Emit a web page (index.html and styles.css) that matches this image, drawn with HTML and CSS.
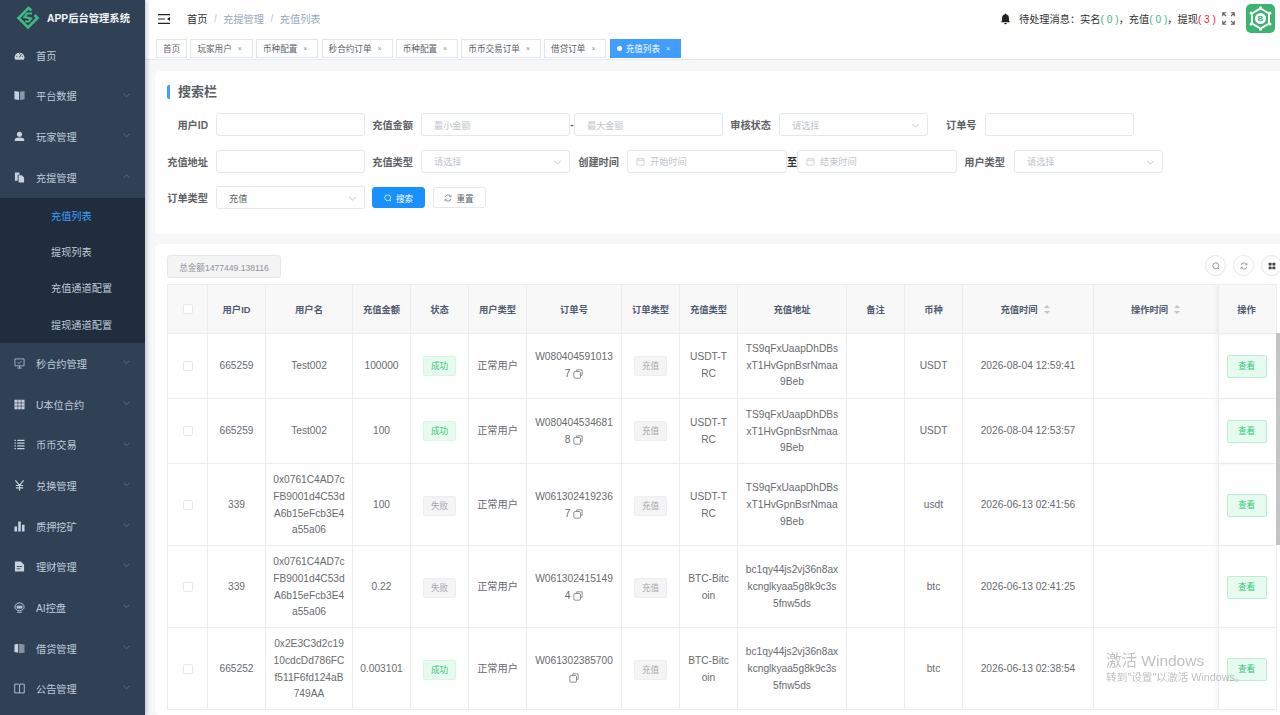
FILE: index.html
```html
<!DOCTYPE html>
<html lang="zh-CN">
<head>
    <meta charset="UTF-8">
    <meta name="viewport" content="width=device-width, initial-scale=1.0">
    <title>APP后台管理系统</title>
    <link rel="stylesheet" href="styles.css">
</head>
<body>
<svg class="defs" width="0" height="0">
    <symbol id="chev" viewBox="0 0 10 6"><path d="M1 1l4 4 4-4" fill="none" stroke="currentColor" stroke-width="1"/></symbol>
    <symbol id="copy" viewBox="0 0 12 12"><path d="M4.500 3V1h6.500v6.500H9" fill="none" stroke="currentColor" stroke-width=".9"/><rect x="1" y="3" width="8" height="8" rx="1.500" fill="none" stroke="currentColor" stroke-width=".9"/></symbol>
</svg>

<div class="app">
    <aside class="sidebar">
        <div class="logo">
            <svg width="24" height="24" viewBox="0 0 24 24"><path d="M15.500 4.500L12.500 2 2.500 12 12 21.500 21.500 12l-3-3" fill="none" stroke="#41b883" stroke-width="2.600"/><path d="M16 7.500H11L8.500 11 15 12.500 13 15.500H9" fill="none" stroke="#41b883" stroke-width="2.200"/></svg>
            <span>APP后台管理系统</span>
        </div>
        <ul class="menu">
            <li class="item"><svg class="ico" viewBox="0 0 12 12"><path d="M.5 8.500a5.500 5.500 0 0 1 11 0l-1 2h-9z" fill="currentColor"/><path d="M6 8l2-3.500M2.500 7h1M8.500 7h1M6 3.500v1" stroke="#304156" stroke-width="1"/></svg><span>首页</span></li>
            <li class="item"><svg class="ico" viewBox="0 0 12 12"><path d="M.5 1l5 .8v9.200l-5-.8z" fill="currentColor"/><path d="M6.500 1.800l5-.8v9.200l-5 .8z" fill="currentColor" opacity=".6"/></svg><span>平台数据</span><svg class="chev"><use href="#chev"/></svg></li>
            <li class="item"><svg class="ico" viewBox="0 0 12 12"><circle cx="6" cy="3.500" r="2.800" fill="currentColor"/><path d="M.8 11V9.500C.8 7.800 3 7 6 7s5.200.8 5.200 2.500V11z" fill="currentColor"/></svg><span>玩家管理</span><svg class="chev"><use href="#chev"/></svg></li>
            <li class="item open"><svg class="ico" viewBox="0 0 12 12"><path d="M1 .5h5v2.500H4v6.500H1z" fill="currentColor"/><path d="M5 3.500h3.500L11 6v5.500H5z" fill="currentColor"/></svg><span>充提管理</span><svg class="chev up"><use href="#chev"/></svg></li>
            <li class="sub active">充值列表</li>
            <li class="sub">提现列表</li>
            <li class="sub">充值通道配置</li>
            <li class="sub last">提现通道配置</li>
            <li class="item"><svg class="ico" viewBox="0 0 12 12"><path d="M1 1h10v7.500H1zM6 8.500V11M3.500 11h5M4 4.500l1.500 1.500L8 3.500" fill="none" stroke="currentColor" stroke-width=".8"/></svg><span>秒合约管理</span><svg class="chev"><use href="#chev"/></svg></li>
            <li class="item"><svg class="ico" viewBox="0 0 12 12"><path d="M.5 .8h11v10.400H.5z" fill="currentColor"/><path d="M4.200 .8v10.400M7.800 .8v10.400M.5 4.300h11M.5 7.700h11" stroke="#304156" stroke-width=".7"/></svg><span>U本位合约</span><svg class="chev"><use href="#chev"/></svg></li>
            <li class="item"><svg class="ico" viewBox="0 0 12 12"><path d="M3.500 1.500H11.500M3.500 4.500H11.500M3.500 7.500H11.500M3.500 10.500H11.500M.5 1.500h1.500M.5 4.500h1.500M.5 7.500h1.500M.5 10.500h1.500" stroke="currentColor" stroke-width="1.300"/></svg><span>币币交易</span><svg class="chev"><use href="#chev"/></svg></li>
            <li class="item"><svg class="ico" viewBox="0 0 12 12"><path d="M1.500 .5L6 5.800 10.500 .5M6 5.800v6M2 6h8M2 8.500h8" fill="none" stroke="currentColor" stroke-width="1.300"/></svg><span>兑换管理</span><svg class="chev"><use href="#chev"/></svg></li>
            <li class="item"><svg class="ico" viewBox="0 0 12 12"><path d="M.5 6h2.800v5.500H.5zM4.600 .5h2.800v11H4.600zM8.700 4h2.800v7.500H8.700z" fill="currentColor"/></svg><span>质押挖矿</span><svg class="chev"><use href="#chev"/></svg></li>
            <li class="item"><svg class="ico" viewBox="0 0 12 12"><path d="M1 .5h6.500L11 4v7.500H1z" fill="currentColor"/><path d="M3 6h6M3 8.500h4" stroke="#304156" stroke-width=".9"/></svg><span>理财管理</span><svg class="chev"><use href="#chev"/></svg></li>
            <li class="item"><svg class="ico" viewBox="0 0 12 12"><path d="M1 5.500a5 4.500 0 0 1 10 0 5 4 0 0 1-10 0zM3.500 11.200h5" fill="none" stroke="currentColor" stroke-width="1"/><path d="M3 4h6v3.200H3z" fill="currentColor"/><path d="M4.500 5.500h.5M7 5.500h.5" stroke="#304156" stroke-width="1"/></svg><span>AI控盘</span><svg class="chev"><use href="#chev"/></svg></li>
            <li class="item"><svg class="ico" viewBox="0 0 12 12"><path d="M.5 1.500l4-.8v10l-4-.8z" fill="currentColor"/><path d="M5.500 .7l6 .8v9l-6 .8z" fill="currentColor" opacity=".55"/></svg><span>借贷管理</span><svg class="chev"><use href="#chev"/></svg></li>
            <li class="item"><svg class="ico" viewBox="0 0 12 12"><path d="M.8 1.200h4.700L6 1.700l.5-.5h4.700v9.600H.8zM6 1.700v9" fill="none" stroke="currentColor" stroke-width=".9"/></svg><span>公告管理</span><svg class="chev"><use href="#chev"/></svg></li>
        </ul>
    </aside>

    <main class="main">
        <header class="topbar">
            <svg class="fold" viewBox="0 0 12 10"><path d="M0 .6h12M0 5h7M0 9.400h12" stroke="#222" stroke-width="1.100"/><path d="M12 3v4L9 5z" fill="#222"/></svg>
            <nav class="crumbs">
                <span class="home">首页</span><i>/</i><span>充提管理</span><i>/</i><span>充值列表</span>
            </nav>
            <div class="notice">
                <svg class="bell" viewBox="0 0 12 12"><path d="M6 0c.6 0 1 .4 1 1 2 .5 2.800 2 2.800 4v3L11 9.500H1L2.200 8V5c0-2 .8-3.500 2.800-4 0-.6.400-1 1-1zM4.500 10.300h3a1.500 1.500 0 0 1-3 0z" fill="#222"/></svg>
                <span>待处理消息：实名<b class="ok">( 0 )</b>，充值<b class="ok">( 0 )</b>，提现<b class="bad">( 3 )</b></span>
            </div>
            <svg class="full" viewBox="0 0 14 14"><path d="M.8 4.500V.8h3.700M.8 .8l3.500 3.500M13.200 4.500V.8H9.500M13.200 .8L9.700 4.300M.8 9.500v3.700h3.700M.8 13.200l3.500-3.500M13.200 9.500v3.700H9.500M13.200 13.200L9.700 9.700" fill="none" stroke="#666" stroke-width="1.300"/></svg>
            <div class="avatar">
                <svg viewBox="0 0 29 29">
                    <path d="M14.500 4.500l8.500 5v10l-8.500 5-8.500-5v-10z" fill="none" stroke="#fff" stroke-width="2"/>
                    <circle cx="14.500" cy="14.500" r="5.500" fill="#fff"/>
                    <g fill="#fff">
                        <circle cx="14.500" cy="3.800" r="1.500"/><circle cx="14.500" cy="25.200" r="1.500"/>
                        <circle cx="5" cy="9" r="1.500"/><circle cx="24" cy="9" r="1.500"/>
                        <circle cx="5" cy="20" r="1.500"/><circle cx="24" cy="20" r="1.500"/>
                    </g>
                    <text x="14.500" y="17.300" text-anchor="middle" class="avatar-b">B</text>
                </svg>
            </div>
        </header>

        <div class="tabs">
            <a class="tab">首页</a>
            <a class="tab">玩家用户<i>×</i></a>
            <a class="tab">币种配置<i>×</i></a>
            <a class="tab">秒合约订单<i>×</i></a>
            <a class="tab">币种配置<i>×</i></a>
            <a class="tab">币币交易订单<i>×</i></a>
            <a class="tab">借贷订单<i>×</i></a>
            <a class="tab current"><em></em>充值列表<i>×</i></a>
        </div>

        <div class="content">
            <section class="card search">
                <h2 class="title">搜索栏</h2>
                <div class="row">
                    <label class="lb w1">用户ID</label><div class="input w-a"></div>
                    <label class="lb w2">充值金额</label><div class="input w-b ph">最小金额</div>
                    <span class="dash">-</span>
                    <div class="input w-b ph">最大金额</div>
                    <label class="lb w3">审核状态</label><div class="input w-a ph sel">请选择<svg class="chev"><use href="#chev"/></svg></div>
                    <label class="lb w4">订单号</label><div class="input w-a"></div>
                </div>
                <div class="row">
                    <label class="lb w1">充值地址</label><div class="input w-a"></div>
                    <label class="lb w2">充值类型</label><div class="input w-b ph sel">请选择<svg class="chev"><use href="#chev"/></svg></div>
                    <label class="lb w5">创建时间</label>
                    <div class="input w-c ph"><svg class="cal" viewBox="0 0 10 10"><path d="M1 2h8v7H1zM1 4h8M3 1v1.500M7 1v1.500" fill="none" stroke="currentColor" stroke-width=".7"/></svg>开始时间</div>
                    <span class="dash to">至</span>
                    <div class="input w-c ph"><svg class="cal" viewBox="0 0 10 10"><path d="M1 2h8v7H1zM1 4h8M3 1v1.500M7 1v1.500" fill="none" stroke="currentColor" stroke-width=".7"/></svg>结束时间</div>
                    <label class="lb w6">用户类型</label><div class="input w-a ph sel">请选择<svg class="chev"><use href="#chev"/></svg></div>
                </div>
                <div class="row">
                    <label class="lb w1">订单类型</label><div class="input w-a val sel">充值<svg class="chev"><use href="#chev"/></svg></div>
                    <button class="btn primary"><svg viewBox="0 0 10 10"><circle cx="4.700" cy="4.700" r="3.700" fill="none" stroke="currentColor" stroke-width=".9"/><path d="M7.500 7.500L9 9" stroke="currentColor" stroke-width=".9"/></svg>搜索</button>
                    <button class="btn"><svg viewBox="0 0 10 10"><path d="M1.300 4a3.800 3.800 0 0 1 7-1M8.700 6a3.800 3.800 0 0 1-7 1" fill="none" stroke="currentColor" stroke-width=".9"/><path d="M8.800 1v2.400H6.400M1.200 9V6.600h2.400" fill="none" stroke="currentColor" stroke-width=".7"/></svg>重置</button>
                </div>
            </section>

            <section class="card list">
                <div class="tools">
                    <span class="total">总金额1477449.138116</span>
                    <div class="tool-btns">
                        <span class="circle"><svg viewBox="0 0 10 10"><circle cx="4.700" cy="4.700" r="3.700" fill="none" stroke="currentColor" stroke-width=".8"/><path d="M7.500 7.500L9 9" stroke="currentColor" stroke-width=".8"/></svg></span>
                        <span class="circle"><svg viewBox="0 0 10 10"><path d="M1.300 4a3.800 3.800 0 0 1 7-1M8.700 6a3.800 3.800 0 0 1-7 1" fill="none" stroke="currentColor" stroke-width=".8"/><path d="M8.800 1v2.400H6.400M1.200 9V6.600h2.400" fill="none" stroke="currentColor" stroke-width=".6"/></svg></span>
                        <span class="circle"><svg viewBox="0 0 10 10"><rect x=".8" y=".8" width="3.700" height="3.700" rx=".6" fill="#444"/><rect x="5.500" y=".8" width="3.700" height="3.700" rx=".6" fill="#444"/><rect x=".8" y="5.500" width="3.700" height="3.700" rx=".6" fill="#444"/><rect x="5.500" y="5.500" width="3.700" height="3.700" rx=".6" fill="#444"/></svg></span>
                    </div>
                </div>
                <table class="grid">
                    <colgroup>
                        <col class="c40"><col class="c58"><col class="c87"><col class="c58"><col class="c58"><col class="c58"><col class="c95"><col class="c58"><col class="c58"><col class="c109"><col class="c58"><col class="c58"><col class="c131"><col class="c125"><col class="c58">
                    </colgroup>
                    <thead>
                        <tr>
                            <th><span class="check head"></span></th><th>用户ID</th><th>用户名</th><th>充值金额</th><th>状态</th><th>用户类型</th><th>订单号</th><th>订单类型</th><th>充值类型</th><th>充值地址</th><th>备注</th><th>币种</th>
                            <th>充值时间<span class="sort"></span></th><th>操作时间<span class="sort"></span></th><th class="fixed">操作</th>
                        </tr>
                    </thead>
                    <tbody>
                        <tr class="r65">
                            <td><span class="check"></span></td><td>665259</td><td>Test002</td><td>100000</td><td><span class="tag ok">成功</span></td><td>正常用户</td>
                            <td class="wrap">W080404591013<br>7 <svg class="cp"><use href="#copy"/></svg></td><td><span class="tag gray">充值</span></td><td class="wrap">USDT-T<br>RC</td>
                            <td class="wrap">TS9qFxUaapDhDBs<br>xT1HvGpnBsrNmaa<br>9Beb</td><td></td><td>USDT</td><td>2026-08-04 12:59:41</td><td></td><td class="fixed"><span class="view">查看</span></td>
                        </tr>
                        <tr class="r65">
                            <td><span class="check"></span></td><td>665259</td><td>Test002</td><td>100</td><td><span class="tag ok">成功</span></td><td>正常用户</td>
                            <td class="wrap">W080404534681<br>8 <svg class="cp"><use href="#copy"/></svg></td><td><span class="tag gray">充值</span></td><td class="wrap">USDT-T<br>RC</td>
                            <td class="wrap">TS9qFxUaapDhDBs<br>xT1HvGpnBsrNmaa<br>9Beb</td><td></td><td>USDT</td><td>2026-08-04 12:53:57</td><td></td><td class="fixed"><span class="view">查看</span></td>
                        </tr>
                        <tr class="r82">
                            <td><span class="check"></span></td><td>339</td><td class="wrap">0x0761C4AD7c<br>FB9001d4C53d<br>A6b15eFcb3E4<br>a55a06</td><td>100</td><td><span class="tag gray">失败</span></td><td>正常用户</td>
                            <td class="wrap">W061302419236<br>7 <svg class="cp"><use href="#copy"/></svg></td><td><span class="tag gray">充值</span></td><td class="wrap">USDT-T<br>RC</td>
                            <td class="wrap">TS9qFxUaapDhDBs<br>xT1HvGpnBsrNmaa<br>9Beb</td><td></td><td>usdt</td><td>2026-06-13 02:41:56</td><td></td><td class="fixed"><span class="view">查看</span></td>
                        </tr>
                        <tr class="r82">
                            <td><span class="check"></span></td><td>339</td><td class="wrap">0x0761C4AD7c<br>FB9001d4C53d<br>A6b15eFcb3E4<br>a55a06</td><td>0.22</td><td><span class="tag gray">失败</span></td><td>正常用户</td>
                            <td class="wrap">W061302415149<br>4 <svg class="cp"><use href="#copy"/></svg></td><td><span class="tag gray">充值</span></td><td class="wrap">BTC-Bitc<br>oin</td>
                            <td class="wrap">bc1qy44js2vj36n8ax<br>kcnglkyaa5g8k9c3s<br>5fnw5ds</td><td></td><td>btc</td><td>2026-06-13 02:41:25</td><td></td><td class="fixed"><span class="view">查看</span></td>
                        </tr>
                        <tr class="r82">
                            <td><span class="check"></span></td><td>665252</td><td class="wrap">0x2E3C3d2c19<br>10cdcDd786FC<br>f511F6fd124aB<br>749AA</td><td>0.003101</td><td><span class="tag ok">成功</span></td><td>正常用户</td>
                            <td class="wrap">W061302385700<br><svg class="cp"><use href="#copy"/></svg></td><td><span class="tag gray">充值</span></td><td class="wrap">BTC-Bitc<br>oin</td>
                            <td class="wrap">bc1qy44js2vj36n8ax<br>kcnglkyaa5g8k9c3s<br>5fnw5ds</td><td></td><td>btc</td><td>2026-06-13 02:38:54</td><td></td><td class="fixed"><span class="view">查看</span></td>
                        </tr>
                    </tbody>
                </table>
                <span class="thumb"></span>
            </section>
        </div>
    </main>
</div>

<div class="watermark">
    <p class="wm-a">激活 Windows</p>
    <p class="wm-b">转到"设置"以激活 Windows。</p>
</div>
</body>
</html>
```

FILE: styles.css
```css
* {
    box-sizing: border-box;
}
html, body {
    height: 100%;
}
body {
    margin: 0;
    overflow: hidden;
    font-family: "Liberation Sans", "Noto Sans CJK SC", sans-serif;
    font-size: 10.2px;
    color: #606266;
    background: #fff;
}
.defs {
    position: absolute;
}
.app {
    display: flex;
    height: 715px;
}

/* sidebar */
.sidebar {
    width: 145px;
    flex: none;
    background: #304156;
    color: #bfcbd9;
    box-shadow: 2px 0 4px rgba(0, 21, 41, .2);
    overflow: hidden;
    position: relative;
    z-index: 2;
}
.logo {
    height: 35px;
    display: flex;
    align-items: center;
    gap: 7px;
    padding-left: 16px;
    color: #f0f3f6;
    font-weight: 700;
    font-size: 10.3px;
}
.menu {
    list-style: none;
    margin: 0;
    padding: 0;
}
.item {
    height: 40.66px;
    display: flex;
    align-items: center;
    padding-left: 14px;
    position: relative;
}
.ico {
    width: 11px;
    height: 11px;
    margin-right: 11px;
    flex: none;
    color: #c8d2de;
}
.item .chev {
    position: absolute;
    right: 15px;
    top: 17px;
}
.chev {
    width: 7px;
    height: 4.500px;
    color: #6f7f92;
}
.chev.up {
    transform: rotate(180deg);
}
.sub {
    height: 36.4px;
    line-height: 36.4px;
    padding-left: 51px;
    padding-top: 1px;
    background: #1f2d3d;
}
.sub.active {
    color: #409eff;
}

/* top bar */
.main {
    flex: 1;
    min-width: 0;
    display: flex;
    flex-direction: column;
}
.topbar {
    height: 37px;
    flex: none;
    display: flex;
    align-items: center;
    padding-left: 13px;
    padding-right: 5px;
    background: #fff;
    box-shadow: 0 1px 2px rgba(0, 21, 41, .06);
}
.fold {
    width: 12px;
    height: 10px;
    margin-right: 17px;
}
.crumbs {
    color: #97a8be;
    display: flex;
    align-items: center;
}
.crumbs .home {
    color: #303133;
}
.crumbs i {
    font-style: normal;
    margin: 0 6.500px;
    color: #c0c4cc;
}
.notice {
    margin-left: auto;
    display: flex;
    align-items: center;
    color: #303133;
}
.bell {
    width: 11px;
    height: 12px;
    margin-right: 8px;
}
.notice b {
    font-weight: 400;
}
.notice .ok {
    color: #41b883;
}
.notice .bad {
    color: #f5222d;
}
.full {
    width: 13px;
    height: 13px;
    margin: 0 11px 0 6px;
}
.avatar {
    width: 29px;
    height: 29px;
    background: #3cb371;
    border-radius: 5px;
}
.avatar svg {
    display: block;
}
.avatar-b {
    font-size: 8px;
    font-weight: 700;
    fill: #3cb371;
}

/* tabs */
.tabs {
    height: 23px;
    flex: none;
    display: flex;
    align-items: center;
    gap: 3.200px;
    padding-left: 11px;
    background: #fff;
    border-bottom: 1px solid #e6e8eb;
}
.tab {
    height: 19px;
    display: flex;
    align-items: center;
    padding: 0 6px;
    border: 1px solid #e2e5ea;
    font-size: 8.6px;
    color: #5a5e66;
    background: #fff;
}
.tab i {
    width: 14px;
    padding-left: 6px;
    font-style: normal;
    font-size: 7px;
    color: #8a8f98;
}
.tab.current {
    background: #409eff;
    border-color: #409eff;
    color: #fff;
}
.tab.current i {
    color: #e6f1ff;
}
.tab em {
    width: 5px;
    height: 5px;
    border-radius: 50%;
    background: #fff;
    margin-right: 4px;
}

/* content */
.content {
    flex: 1;
    min-height: 0;
    background: #f6f7f9;
    padding: 11px 0 0 10px;
    display: flex;
    flex-direction: column;
    gap: 10px;
    overflow: hidden;
}
.card {
    background: #fff;
    border-radius: 5px 0 0 5px;
}
.search {
    height: 163px;
    flex: none;
    padding: 14px 0 0 12px;
}
.title {
    margin: 0 0 14px;
    padding-left: 8px;
    height: 14px;
    line-height: 14px;
    font-size: 13px;
    font-weight: 700;
    color: #5a5e66;
    border-left: 3px solid #409eff;
    border-radius: 2px 0 0 2px;
}
.row {
    display: flex;
    align-items: center;
    height: 23px;
    margin-bottom: 13.500px;
}
.lb {
    font-weight: 700;
    color: #606266;
    text-align: right;
    white-space: nowrap;
    flex: none;
    margin-right: 8px;
}
.w1 { width: 41px; }
.w2 { width: 41px; margin-left: 7px; }
.w3 { width: 41px; margin-left: 7px; }
.w4 { width: 30px; margin-left: 18px; margin-right: 9px; }
.w5 { width: 41px; margin-left: 8px; margin-right: 8px; }
.w6 { width: 41px; margin-left: 7px; margin-right: 9px; }
.input {
    height: 23px;
    flex: none;
    display: flex;
    align-items: center;
    padding: 0 12px;
    border: 1px solid #e4e7ed;
    border-radius: 3px;
    font-size: 9.200px;
    position: relative;
    background: #fff;
}
.w-a { width: 149px; }
.w-b { width: 149px; }
.w-c { width: 160px; }
.ph {
    color: #c0c4cc;
}
.val {
    color: #606266;
}
.sel .chev {
    position: absolute;
    right: 7px;
    top: 9px;
    color: #b4b8bf;
    width: 9px;
    height: 5px;
}
.cal {
    width: 9px;
    height: 9px;
    margin-right: 5px;
    margin-left: -4px;
}
.dash {
    width: 4px;
    flex: none;
    text-align: center;
    font-weight: 700;
}
.dash.to {
    width: 10px;
    color: #303133;
    font-size: 10.2px;
}
.btn {
    height: 21px;
    width: 53px;
    margin: 0 0 0 7.500px;
    border: 1px solid #e4e7ed;
    background: #fff;
    border-radius: 3px;
    font: inherit;
    font-size: 8.600px;
    color: #606266;
    display: flex;
    align-items: center;
    justify-content: center;
    gap: 4px;
    padding: 0;
}
.lb + .input + .btn {
    margin-left: 7px;
}
.btn svg {
    width: 8px;
    height: 8px;
}
.btn.primary {
    background: #1890ff;
    border-color: #1890ff;
    color: #fff;
}

/* table */
.list {
    flex: 1;
    min-height: 0;
    padding: 11px 0 0 12px;
    position: relative;
    overflow: hidden;
}
.tools {
    height: 29px;
    display: flex;
    align-items: flex-start;
    justify-content: space-between;
}
.total {
    height: 23px;
    width: 114px;
    display: flex;
    align-items: center;
    justify-content: center;
    border: 1px solid #e4e7ed;
    border-radius: 3px;
    background: #f4f4f5;
    color: #909399;
    font-size: 8.600px;
}
.tool-btns {
    display: flex;
    gap: 7px;
    margin-right: -2px;
}
.circle {
    width: 21px;
    height: 21px;
    border: 1px solid #e4e7ed;
    border-radius: 50%;
    display: flex;
    align-items: center;
    justify-content: center;
    color: #606266;
}
.circle svg {
    width: 8px;
    height: 8px;
}
.grid {
    border-collapse: collapse;
    table-layout: fixed;
    width: 1109px;
    border-top: 1px solid #e9ecf0;
}
.c40 { width: 40px; }
.c58 { width: 58px; }
.c87 { width: 87px; }
.c95 { width: 95px; }
.c109 { width: 109px; }
.c125 { width: 125px; }
.c131 { width: 131px; }
.grid th, .grid td {
    border: 1px solid #ebedf0;
    text-align: center;
    padding: 0 5px;
}
.grid th {
    height: 49px;
    padding-bottom: 1px;
    background: #f8f8f9;
    color: #515a6e;
    font-weight: 700;
    font-size: 9.300px;
}
.grid td {
    line-height: 16.800px;
    color: #686b70;
}
.wrap {
    white-space: nowrap;
}
.r65 td {
    height: 65px;
}
.r65 + .r65 .wrap {
    padding-top: 2px;
}
.r82 td {
    height: 82px;
    padding-top: 2px;
}
.grid .fixed {
    padding-left: 3px;
    box-shadow: -3px 0 4px rgba(0, 0, 0, .05);
}
.check {
    display: inline-block;
    width: 10px;
    height: 10px;
    border: 1px solid #e6e8ec;
    border-radius: 2px;
    background: #fff;
    vertical-align: middle;
}
.sort {
    display: inline-block;
    width: 7px;
    height: 9px;
    margin-left: 6px;
    margin-right: 5px;
    vertical-align: -1px;
    position: relative;
}
th:nth-child(14) .sort {
    margin-right: 0;
}
.sort::before, .sort::after {
    content: "";
    position: absolute;
    left: 0;
    border-left: 3.500px solid transparent;
    border-right: 3.500px solid transparent;
}
.sort::before {
    top: 0;
    border-bottom: 3.500px solid #c0c4cc;
}
.sort::after {
    bottom: 0;
    border-top: 3.500px solid #c0c4cc;
}
.tag {
    display: inline-block;
    width: 33px;
    height: 20px;
    line-height: 18px;
    border: 1px solid;
    border-radius: 2px;
    font-size: 8.600px;
    vertical-align: middle;
}
.tag.ok {
    background: #e7faf0;
    border-color: #d7f6e5;
    color: #2fca75;
}
.tag.gray {
    background: #f4f4f5;
    border-color: #eeeef0;
    color: #a6a9ad;
}
.view {
    display: inline-block;
    width: 40px;
    height: 23px;
    line-height: 21px;
    border: 1px solid #bdeed3;
    border-radius: 2px;
    background: #e7faf0;
    color: #2fca75;
    font-size: 8.600px;
    vertical-align: middle;
}
.cp {
    width: 10px;
    height: 10px;
    vertical-align: -2px;
    color: #686b70;
}
.thumb {
    position: absolute;
    right: 0;
    top: 89px;
    width: 4px;
    height: 212px;
    background: #c4c4c4;
}

/* activation watermark over the page */
.watermark {
    position: fixed;
    left: 1106px;
    top: 652px;
    color: rgba(90, 90, 90, .38);
    z-index: 5;
    white-space: nowrap;
}
.watermark p {
    margin: 0;
}
.wm-a {
    font-size: 15.500px;
    line-height: 18px;
}
.wm-b {
    font-size: 10.700px;
    line-height: 14px;
}
```
